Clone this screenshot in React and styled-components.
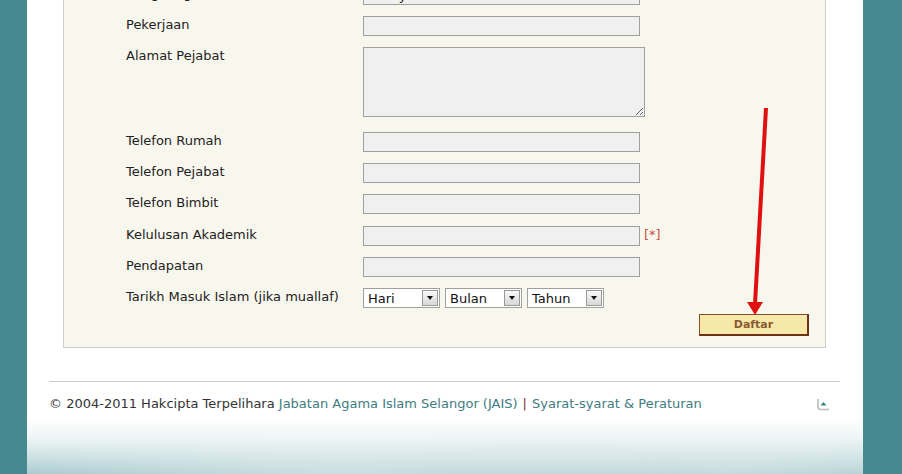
import React from "react";
import styled, { createGlobalStyle } from "styled-components";

const Global = createGlobalStyle`
  html, body { margin: 0; padding: 0; }
  body { font-family: "DejaVu Sans", Verdana, sans-serif; }
`;

const Page = styled.div`
  display: flex;
  height: 474px;
  overflow: hidden;
  background: #468a90;
`;

const Gutter = styled.div`
  width: ${(p) => p.w}px;
  flex: none;
`;

const Main = styled.div`
  width: 836px;
  flex: none;
  display: flex;
  flex-direction: column;
  position: relative;
  background:
    radial-gradient(ellipse 360px 50px at 320px 480px, rgba(255,255,255,0.45), rgba(255,255,255,0) 100%),
    radial-gradient(ellipse 300px 40px at 700px 472px, rgba(255,255,255,0.35), rgba(255,255,255,0) 100%),
    linear-gradient(to bottom, #ffffff 0, #ffffff 418px, #eef5f5 438px, #cfe2e4 456px, #a7c9cd 474px);
`;

const Panel = styled.div`
  position: relative;
  margin: -25px 0 0 36px;
  width: 763px;
  box-sizing: border-box;
  background: #f8f7ee;
  border: 1px solid #cfcfc8;
  border-top: none;
  padding: 10px 0 11px 62px;
  display: flex;
  flex-direction: column;
`;

const Row = styled.div`
  display: grid;
  grid-template-columns: 237px auto;
  height: ${(p) => p.h || 31}px;
`;

const Label = styled.div`
  font-size: 13px;
  line-height: 15px;
  color: #222;
  padding-top: 1px;
`;

const Field = styled.div`
  display: flex;
  align-items: flex-start;
  gap: ${(p) => p.gap || 4}px;
`;

const Input = styled.input`
  box-sizing: border-box;
  width: 277px;
  height: 20px;
  margin: 0;
  padding: 0 4px;
  border: 1px solid #a0a0a0;
  background: #f0f0f0;
  font-family: "DejaVu Sans", Verdana, sans-serif;
  font-size: 13px;
  color: #222;
  outline: none;
`;

const TextArea = styled.textarea`
  box-sizing: border-box;
  width: 282px;
  height: 70px;
  margin: 0;
  padding: 2px 4px;
  border: 1px solid #a0a0a0;
  background: #f0f0f0;
  font-family: "DejaVu Sans", Verdana, sans-serif;
  font-size: 13px;
  outline: none;
`;

const Required = styled.span`
  font-size: 13px;
  line-height: 18px;
  color: #c9533f;
`;

const Select = styled.div`
  box-sizing: border-box;
  width: 77px;
  height: 20px;
  border: 1px solid #a0a0a0;
  background: #ffffff;
  display: flex;
  align-items: center;
  justify-content: space-between;
  padding: 0 1px 0 4px;
  font-size: 13px;
  color: #111;
`;

const SelectBtn = styled.span`
  box-sizing: border-box;
  width: 16px;
  height: 16px;
  border: 1px solid #999;
  background: linear-gradient(to bottom, #f8f8f8, #d8d8d8);
  display: flex;
  align-items: center;
  justify-content: center;
  &::after {
    content: "";
    border-left: 3px solid transparent;
    border-right: 3px solid transparent;
    border-top: 4px solid #111;
  }
`;

const ButtonRow = styled.div`
  display: flex;
  justify-content: flex-end;
  padding-right: 16px;
  margin-top: 6px;
`;

const Button = styled.button`
  box-sizing: border-box;
  width: 110px;
  height: 22px;
  margin: 0;
  padding: 0;
  background: #f5e8a8;
  border: 1px solid #8a4b2c;
  border-right: 2px solid #6e3219;
  border-bottom: 2px solid #6e3219;
  font-family: "DejaVu Sans", Verdana, sans-serif;
  font-size: 11px;
  font-weight: bold;
  color: #8a5a30;
`;

const ArrowOverlay = styled.svg`
  position: absolute;
  left: 0;
  top: 25px;
  pointer-events: none;
`;

const Footer = styled.div`
  margin: 33px 23px 0 22px;
  border-top: 1px solid #cccccc;
  padding: 14px 10px 0 0;
  display: flex;
  justify-content: space-between;
  align-items: center;
`;

const FooterText = styled.div`
  font-size: 13px;
  line-height: 16px;
  color: #333;
`;

const Link = styled.span`
  color: #3f7c82;
`;

const Sep = styled.span`
  color: #7a2f3a;
  margin: 0 5px;
`;

const rows = [
  { label: "Pekerjaan" },
  { label: "Alamat Pejabat", area: true, h: 85 },
  { label: "Telefon Rumah" },
  { label: "Telefon Pejabat" },
  { label: "Telefon Bimbit", h: 32 },
  { label: "Kelulusan Akademik", req: true },
  { label: "Pendapatan" },
];

export default function App() {
  return (
    <>
      <Global />
      <Page>
        <Gutter w={27} />
        <Main>
          <Panel>
            <Row>
              <Label>Warganegara</Label>
              <Field>
                <Input readOnly defaultValue="Malaysia" />
                <Required>[*]</Required>
              </Field>
            </Row>
            {rows.map((r) => (
              <Row key={r.label} h={r.h}>
                <Label>{r.label}</Label>
                <Field>
                  {r.area ? <TextArea readOnly /> : <Input readOnly />}
                  {r.req && <Required>[*]</Required>}
                </Field>
              </Row>
            ))}
            <Row h={20}>
              <Label>Tarikh Masuk Islam (jika muallaf)</Label>
              <Field gap={5}>
                <Select>Hari<SelectBtn /></Select>
                <Select>Bulan<SelectBtn /></Select>
                <Select>Tahun<SelectBtn /></Select>
              </Field>
            </Row>
            <ButtonRow>
              <Button>Daftar</Button>
            </ButtonRow>
            <ArrowOverlay width="763" height="380" viewBox="0 0 763 380">
              <line x1="702" y1="108" x2="691" y2="304" stroke="#e01010" strokeWidth="4" />
              <polygon points="683,302 699,302 691,315" fill="#e01010" />
            </ArrowOverlay>
          </Panel>
          <Footer>
            <FooterText>
              © 2004-2011 Hakcipta Terpelihara <Link>Jabatan Agama Islam Selangor (JAIS)</Link>
              <Sep>|</Sep>
              <Link>Syarat-syarat &amp; Peraturan</Link>
            </FooterText>
            <svg width="14" height="14" viewBox="0 0 14 14">
              <path d="M2 2 V10 Q2 12.5 4.5 12.5 H13" fill="none" stroke="#bdbdbd" strokeWidth="1.6" />
              <polygon points="4.5,8.5 10.5,8.5 7.5,5" fill="#2f8a84" />
            </svg>
          </Footer>
        </Main>
        <Gutter w={39} />
      </Page>
    </>
  );
}
